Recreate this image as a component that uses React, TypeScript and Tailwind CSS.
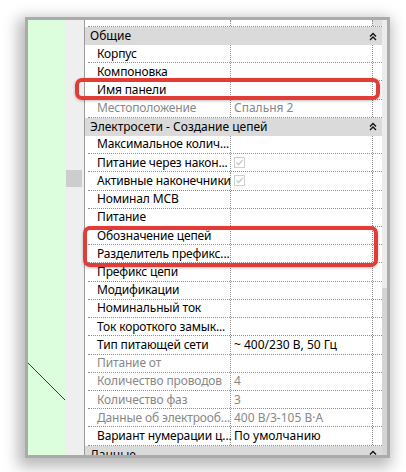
import React from 'react';

type Row = {
  label: string;
  value?: string;
  muted?: boolean;
  check?: boolean;
};

type Group = {
  title: string;
  single?: boolean;
  rows: Row[];
};

const groups: Group[] = [
  {
    title: 'Общие',
    rows: [
      { label: 'Корпус' },
      { label: 'Компоновка' },
      { label: 'Имя панели' },
      { label: 'Местоположение', value: 'Спальня 2', muted: true },
    ],
  },
  {
    title: 'Электросети - Создание цепей',
    rows: [
      { label: 'Максимальное колич...' },
      { label: 'Питание через након...', check: true },
      { label: 'Активные наконечники', check: true },
      { label: 'Номинал MCB' },
      { label: 'Питание' },
      { label: 'Обозначение цепей' },
      { label: 'Разделитель префикс...' },
      { label: 'Префикс цепи' },
      { label: 'Модификации' },
      { label: 'Номинальный ток' },
      { label: 'Ток короткого замык...' },
      { label: 'Тип питающей сети', value: '~ 400/230 В, 50 Гц' },
      { label: 'Питание от', muted: true },
      { label: 'Количество проводов', value: '4', muted: true },
      { label: 'Количество фаз', value: '3', muted: true },
      { label: 'Данные об электрооб...', value: '400 В/3-105 В·А', muted: true },
      { label: 'Вариант нумерации ц...', value: 'По умолчанию' },
    ],
  },
  { title: 'Данные', single: true, rows: [] },
];

const Chevrons = ({ single }: { single?: boolean }) => (
  <svg width="8" height="9" viewBox="0 0 8 9" fill="none" stroke="#111" strokeWidth="1.4">
    <path d="M1 4.5 L4 1.5 L7 4.5" />
    {!single && <path d="M1 8 L4 5 L7 8" />}
  </svg>
);

const CheckBox = () => (
  <div className="w-[11px] h-[11px] border border-[#cfcfcf] bg-white flex items-center justify-center">
    <svg width="9" height="9" viewBox="0 0 9 9" fill="none" stroke="#c4c4c4" strokeWidth="1.2">
      <path d="M1.5 4.5 L3.6 6.6 L7.6 2" />
    </svg>
  </div>
);

const dotted = 'border-dotted border-[#8d8d8d]';

function PropRow({ row }: { row: Row }) {
  const tone = row.muted ? 'text-[#888]' : 'text-black';
  return (
    <div className="flex h-[18.23px] shrink-0 bg-white">
      <div className="w-[3px] shrink-0" />
      <div className={`flex flex-1 border-b ${dotted}`}>
        <div className={`w-[142px] shrink-0 pl-[9px] flex items-center whitespace-nowrap tracking-[-0.15px] ${tone}`}>
          {row.label}
        </div>
        <div className={`w-[142px] shrink-0 border-l ${dotted} pl-[3px] flex items-center whitespace-nowrap ${tone}`}>
          {row.check ? <CheckBox /> : row.value}
        </div>
        <div className={`flex-1 border-l ${dotted}`} />
      </div>
    </div>
  );
}

export default function App() {
  return (
    <div
      className="relative w-[406px] h-[472px] bg-white overflow-hidden text-[12px] leading-none"
      style={{ fontFamily: '"Noto Sans", "Open Sans", sans-serif' }}
    >
      <div className="ml-[25px] mt-[17px] w-[365px] h-[441px] border-[3px] border-[#ababab] shadow-[-3px_5px_14px_4px_rgba(0,0,0,0.28)] flex overflow-hidden">
        {/* drawing canvas */}
        <div className="w-[37px] shrink-0 bg-[#dcfedc] flex flex-col">
          <svg width="37" height="37" viewBox="0 0 37 37" className="mt-[343px]">
            <line x1="0" y1="0" x2="37" y2="37" stroke="#222" strokeWidth="0.9" />
          </svg>
        </div>

        {/* left scroll strip */}
        <div className="w-[19px] shrink-0 bg-[#efefef] flex flex-col">
          <div className="mt-[150px] ml-[1px] w-[16px] h-[17px] bg-[#cdcdcd]" />
        </div>

        {/* properties grid */}
        <div className="flex-1 flex flex-col border-l border-[#9a9a9a] bg-white">
          <div className="flex h-[7px] shrink-0">
            <div className="w-[3px] shrink-0" />
            <div className={`flex flex-1 border-b ${dotted}`}>
              <div className="w-[142px] shrink-0" />
              <div className={`w-[142px] shrink-0 border-l ${dotted}`} />
              <div className={`flex-1 border-l ${dotted} bg-[#e0e0e0]`} />
            </div>
          </div>
          {groups.map((g) => (
            <React.Fragment key={g.title}>
              <div className="flex h-[18px] shrink-0 items-center bg-[#dadada] pl-[5px] pr-[5px] text-black">
                <span className="flex-1 whitespace-nowrap">{g.title}</span>
                <Chevrons single={g.single} />
              </div>
              {g.rows.map((r) => (
                <PropRow key={r.label} row={r} />
              ))}
            </React.Fragment>
          ))}
        </div>

        {/* right scroll strip */}
        <div className="w-[5px] shrink-0 flex flex-col bg-[#ececec]">
          <div className="mt-[268px] flex-1 bg-[#d4d4d4]" />
        </div>
      </div>

      {/* highlight marks */}
      <div className="absolute left-[75px] top-[78px] w-[305px] h-[22px] border-4 border-[#e33b35] rounded-[7px] shadow-[0_1px_3px_rgba(0,0,0,0.25)]" />
      <div className="absolute left-[83px] top-[226px] w-[295px] h-[41px] border-4 border-[#e33b35] rounded-[7px] shadow-[0_1px_3px_rgba(0,0,0,0.25)]" />
    </div>
  );
}
